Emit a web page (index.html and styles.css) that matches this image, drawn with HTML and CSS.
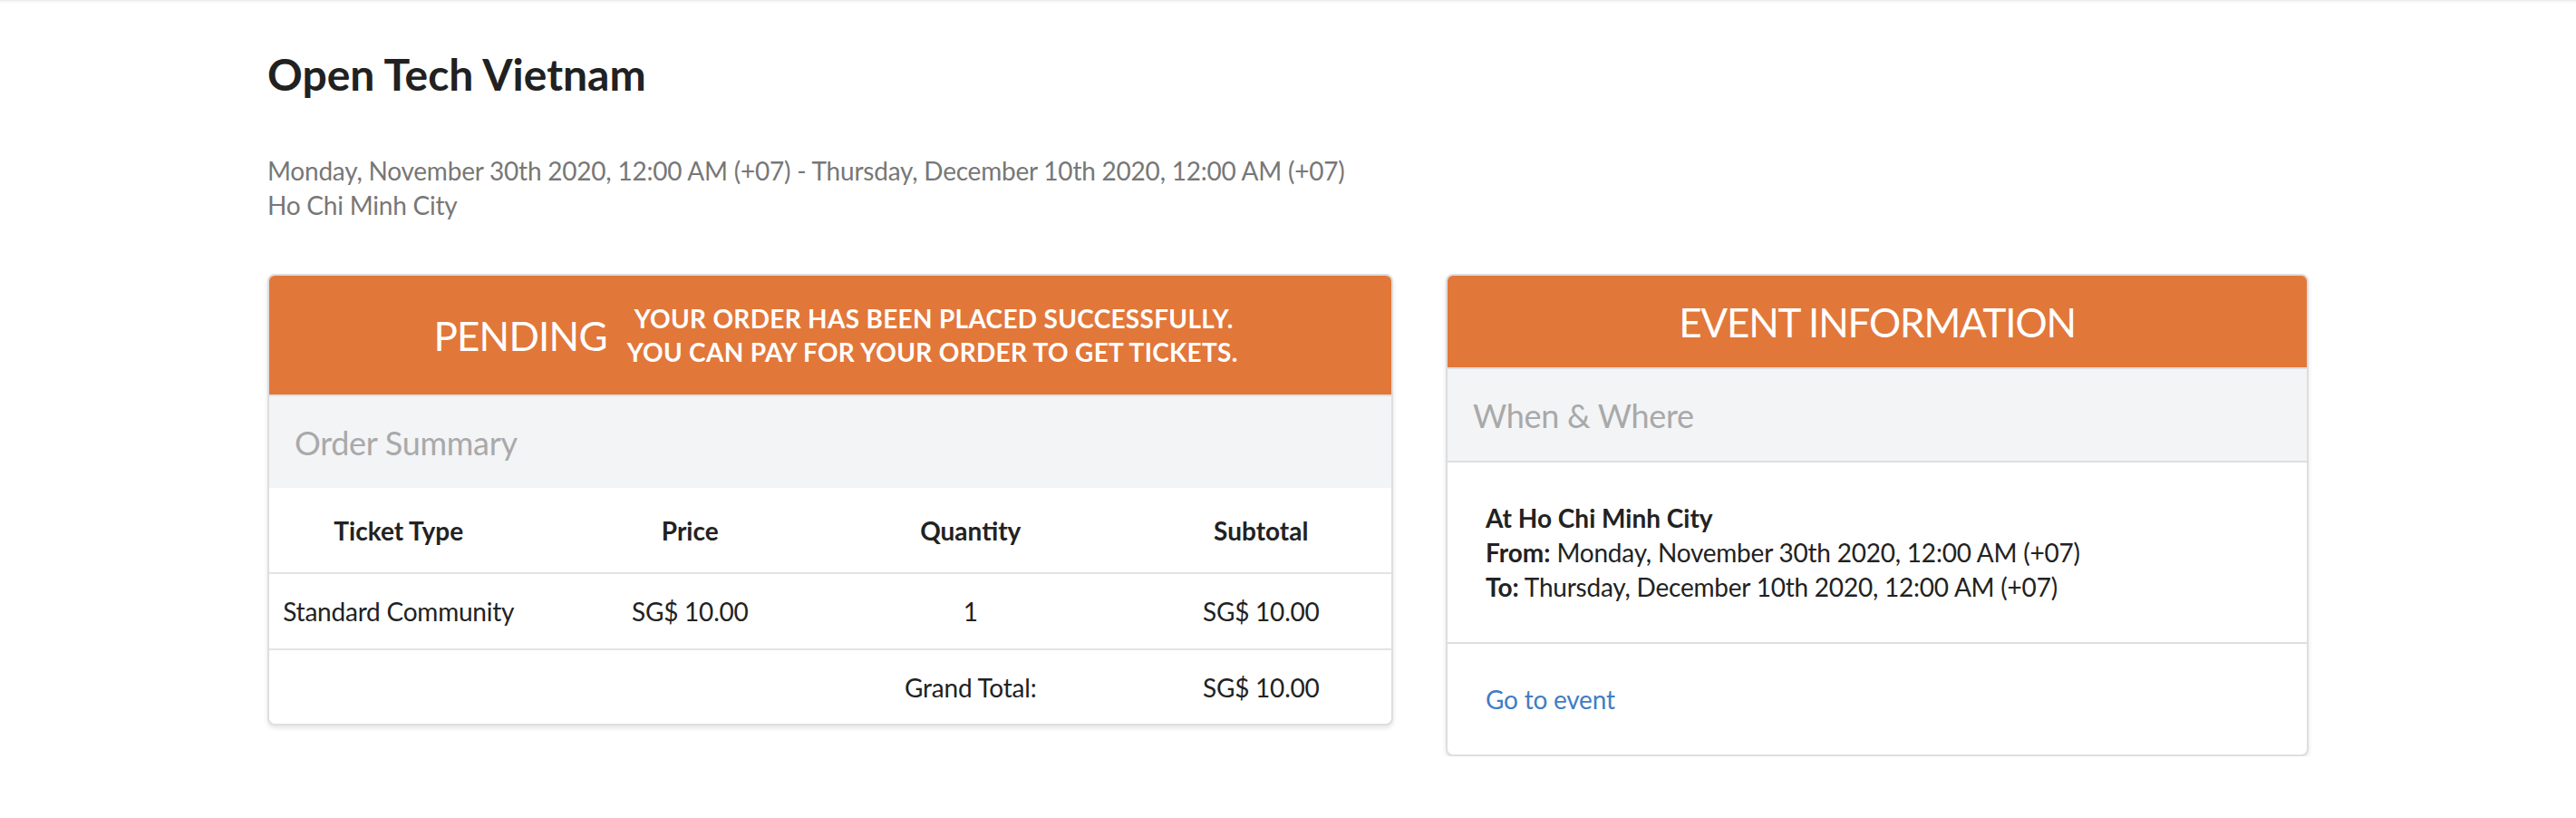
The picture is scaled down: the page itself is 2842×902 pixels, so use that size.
FILE: index.html
```html
<!DOCTYPE html>
<html lang="en">
<head>
<meta charset="utf-8">
<title>Open Tech Vietnam - Order</title>
<link rel="stylesheet" href="styles.css">
</head>
<body>
<div class="topbar"></div>
<main class="page">
  <h1 class="event-title">Open Tech Vietnam</h1>
  <div class="event-meta">
    <div>Monday, November 30th 2020, 12:00 AM (+07) - Thursday, December 10th 2020, 12:00 AM (+07)</div>
    <div>Ho Chi Minh City</div>
  </div>
  <div class="cards">
    <section class="card order-card">
      <div class="card-head status-head">
        <span class="status">PENDING</span>
        <span class="status-msg">YOUR ORDER HAS BEEN PLACED SUCCESSFULLY.<br>YOU CAN PAY FOR YOUR ORDER TO GET TICKETS.</span>
      </div>
      <div class="band">Order Summary</div>
      <table class="summary">
        <thead>
          <tr><th>Ticket Type</th><th>Price</th><th>Quantity</th><th>Subtotal</th></tr>
        </thead>
        <tbody>
          <tr><td>Standard Community</td><td>SG$ 10.00</td><td>1</td><td>SG$ 10.00</td></tr>
          <tr class="total"><td></td><td></td><td>Grand Total:</td><td>SG$ 10.00</td></tr>
        </tbody>
      </table>
    </section>
    <section class="card info-card">
      <div class="card-head info-head">EVENT INFORMATION</div>
      <div class="band">When &amp; Where</div>
      <div class="info-body">
        <div class="strong">At Ho Chi Minh City</div>
        <div><span class="strong">From:</span> Monday, November 30th 2020, 12:00 AM (+07)</div>
        <div><span class="strong">To:</span> Thursday, December 10th 2020, 12:00 AM (+07)</div>
      </div>
      <div class="info-foot"><a href="#" class="link">Go to event</a></div>
    </section>
  </div>
</main>
</body>
</html>
```
FILE: styles.css
```css
html, body {
  margin: 0;
  padding: 0;
  background: #ffffff;
}
body {
  font-family: Lato, "Open Sans", "Liberation Sans", sans-serif;
  color: #222222;
  font-size: 28px;
}
.topbar {
  height: 1px;
  background: #ececec;
  box-shadow: 0 1px 3px rgba(0, 0, 0, 0.12);
}
.page {
  width: 2252px;
  margin: 0 auto;
  padding-top: 53px;
}
.event-title {
  margin: 0;
  font-size: 48px;
  line-height: 56px;
  font-weight: 700;
  color: #212121;
}
.event-meta {
  margin-top: 59px;
  font-size: 28px;
  line-height: 38px;
  color: #777777;
  letter-spacing: -0.22px;
}
.cards {
  margin-top: 57px;
  display: flex;
  align-items: flex-start;
  gap: 58px;
}
.card {
  border: 2px solid #dedede;
  border-radius: 8px;
  overflow: hidden;
  background: #ffffff;
  box-shadow: 0 3px 5px rgba(0, 0, 0, 0.10);
}
.order-card {
  width: 1242px;
  box-sizing: border-box;
}
.info-card {
  width: 952px;
  box-sizing: border-box;
}
.card-head {
  background: #e2773a;
  color: #ffffff;
  border-bottom: 2px solid #dedede;
  display: flex;
  align-items: center;
  justify-content: center;
}
.status-head {
  height: 131px;
  gap: 22px;
  padding-left: 12px;
}
.status {
  font-size: 44px;
  line-height: 44px;
  letter-spacing: -0.8px;
}
.status-msg {
  font-size: 28px;
  line-height: 37px;
  font-weight: 700;
  text-indent: 8px;
  letter-spacing: 0.3px;
}
.info-head {
  height: 101px;
  font-size: 44px;
  line-height: 44px;
  letter-spacing: -1.2px;
}
.band {
  background: #f3f4f6;
  height: 101px;
  display: flex;
  align-items: center;
  padding-left: 28px;
  font-size: 36px;
  color: #a9a9a9;
  letter-spacing: -0.3px;
}
.info-card .band {
  border-bottom: 2px solid #dedede;
}
.summary {
  width: 100%;
  table-layout: fixed;
  border-collapse: collapse;
  font-size: 28px;
  color: #222222;
  letter-spacing: -0.22px;
}
.summary th,
.summary td {
  text-align: center;
  padding: 0 16px;
}
.summary th:first-child,
.summary td:first-child {
  padding-left: 4px;
  padding-right: 28px;
}
.summary th:last-child,
.summary td:last-child {
  padding-left: 26px;
  padding-right: 4px;
}
.summary th {
  height: 93px;
  font-weight: 700;
  letter-spacing: 0;
  border-bottom: 2px solid #e3e3e3;
}
.summary td {
  height: 82px;
  border-bottom: 2px solid #e3e3e3;
}
.summary tr.total td {
  height: 81px;
  border-bottom: none;
}
.info-body {
  padding: 42px;
  line-height: 38px;
  color: #222222;
  letter-spacing: -0.22px;
  border-bottom: 2px solid #dedede;
}
.strong {
  font-weight: 700;
  letter-spacing: 0;
}
.info-foot {
  padding: 42px;
  line-height: 38px;
}
.link {
  color: #417dc4;
  text-decoration: none;
  letter-spacing: -0.22px;
}
```
